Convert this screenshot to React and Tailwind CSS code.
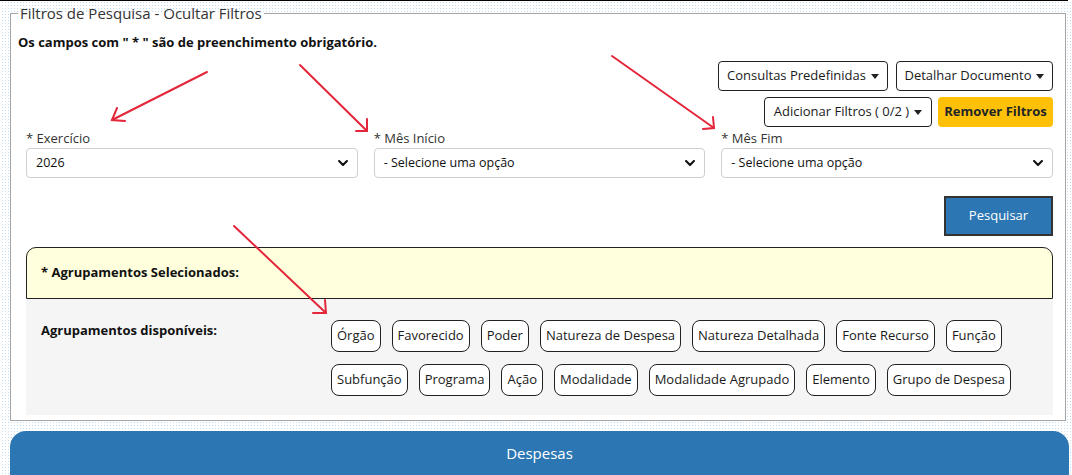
import React from 'react';

const chips = [
  'Órgão', 'Favorecido', 'Poder', 'Natureza de Despesa', 'Natureza Detalhada', 'Fonte Recurso', 'Função',
  'Subfunção', 'Programa', 'Ação', 'Modalidade', 'Modalidade Agrupado', 'Elemento', 'Grupo de Despesa',
];

const fields = [
  { label: '* Exercício', value: '2026' },
  { label: '* Mês Início', value: '- Selecione uma opção' },
  { label: '* Mês Fim', value: '- Selecione uma opção' },
];

function Caret() {
  return <span className="ml-[5px] inline-block border-x-[4px] border-t-[5px] border-x-transparent border-t-[#222]"></span>;
}

function Chevron() {
  return (
    <svg width="10" height="6" viewBox="0 0 10 6" className="shrink-0">
      <path d="M1.1 1.1 L5 4.9 L8.9 1.1" fill="none" stroke="#111" strokeWidth="2.1" strokeLinecap="round" strokeLinejoin="round" />
    </svg>
  );
}

// setas vermelhas de anotação por cima do print
const arrows = [
  { line: [207, 72, 112, 120], head: [[125, 121], [117, 108]] },
  { line: [300, 65, 367, 131], head: [[356, 131], [367, 119]] },
  { line: [612, 56, 714, 128], head: [[703, 129], [713, 117]] },
  { line: [234, 226, 326, 313], head: [[313, 313], [325, 300]] },
];

export default function App() {
  return (
    <div className="relative w-[1072px] h-[475px] overflow-hidden font-['Open_Sans',sans-serif] text-[#1a1a1a] bg-[linear-gradient(90deg,#fff_2px,transparent_2px),linear-gradient(#fff_2px,#c1def6_2px)] bg-[length:3px_3px]">
      <div className="h-px w-[1068px] bg-black"></div>

      <fieldset className="ml-[10px] mr-[6px] mt-[2px] border border-[#a6a6a6] bg-white pl-[7px] pr-[12px] pb-[5px]">
        <legend className="px-[2px] text-[15px] leading-[20px] text-[#333]">Filtros de Pesquisa - Ocultar Filtros</legend>

        <p className="mt-[11px] text-[13px] leading-[16px] font-bold text-[#111]">
          Os campos com " * " são de preenchimento obrigatório.
        </p>

        <div className="ml-[8px]">
          <div className="mt-[11px] flex flex-col items-end gap-[6px]">
            <div className="flex gap-[8px]">
              <button className="h-[30px] w-[170px] flex items-center justify-center rounded-[4px] border border-[#222] bg-white text-[13px]">
                Consultas Predefinidas<Caret />
              </button>
              <button className="h-[30px] w-[157px] flex items-center justify-center rounded-[4px] border border-[#222] bg-white text-[13px]">
                Detalhar Documento<Caret />
              </button>
            </div>
            <div className="flex gap-[6px]">
              <button className="h-[30px] w-[168px] flex items-center justify-center rounded-[4px] border border-[#222] bg-white text-[13px]">
                Adicionar Filtros ( 0/2 )<Caret />
              </button>
              <button className="h-[30px] w-[115px] flex items-center justify-center rounded-[4px] bg-[#ffc107] text-[13px] font-bold text-[#212529]">
                Remover Filtros
              </button>
            </div>
          </div>

          <div className="grid grid-cols-3 gap-x-4">
            {fields.map((f) => (
              <div key={f.label}>
                <div className="mt-[2px] mb-[1px] h-[18px] text-[13px] leading-[18px] text-[#333]">{f.label}</div>
                <div className="h-[30px] flex items-center justify-between rounded-[4px] border border-[#cfcfcf] bg-white pl-[9px] pr-[9px] text-[12.5px] text-[#111]">
                  <span>{f.value}</span>
                  <Chevron />
                </div>
              </div>
            ))}
          </div>

          <div className="mt-[18px] flex justify-end">
            <button className="h-[40px] w-[109px] border-2 border-[#333] bg-[#2c77b3] text-[13px] text-white">Pesquisar</button>
          </div>

          <div className="mt-[11px] h-[52px] flex items-center rounded-t-[10px] border border-[#222] bg-[#ffffdd] px-[14px] text-[13px] font-bold text-[#111]">
            * Agrupamentos Selecionados:
          </div>

          <div className="flex h-[116px] bg-[#f5f5f5] pt-[21px] pl-[15px]">
            <div className="w-[290px] shrink-0 pt-[1px] text-[13px] leading-[18px] font-bold text-[#111]">Agrupamentos disponíveis:</div>
            <div className="w-[710px] flex flex-wrap content-start gap-x-[11px] gap-y-[12px]">
              {chips.map((c) => (
                <span key={c} className="h-[32px] flex items-center rounded-[8px] border border-[#222] bg-white px-[5px] text-[13px] text-[#1a1a1a]">
                  {c}
                </span>
              ))}
            </div>
          </div>
        </div>
      </fieldset>

      <div className="ml-[10px] mr-[3px] mt-[10px] h-[60px] rounded-t-[16px] bg-[#2c77b3] pt-[11px] text-center text-[15px] text-white">
        Despesas
      </div>

      <svg className="pointer-events-none absolute inset-0" width="1072" height="475">
        {arrows.map((a, i) => (
          <g key={i} stroke="#e3263a" strokeWidth="2" strokeLinecap="round" fill="none">
            <line x1={a.line[0]} y1={a.line[1]} x2={a.line[2]} y2={a.line[3]} />
            <polyline points={`${a.head[0][0]},${a.head[0][1]} ${a.line[2]},${a.line[3]} ${a.head[1][0]},${a.head[1][1]}`} />
          </g>
        ))}
      </svg>
    </div>
  );
}
